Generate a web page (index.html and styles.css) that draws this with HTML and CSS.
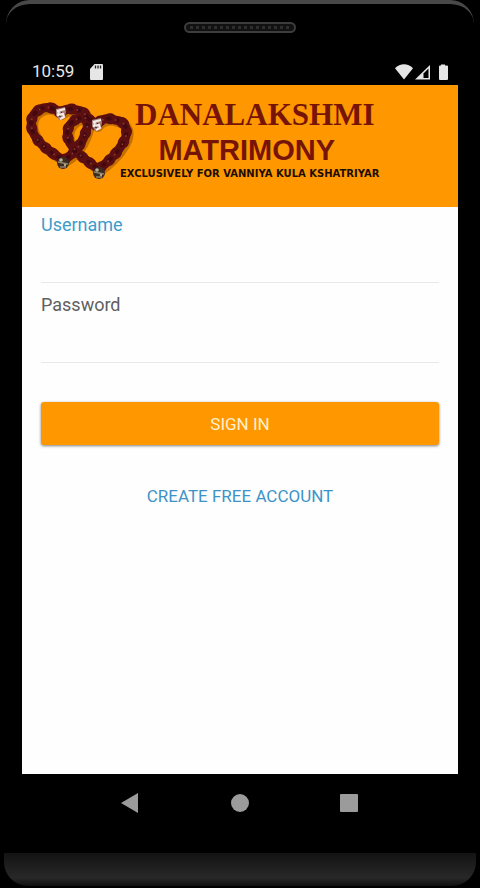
FILE: index.html
```html
<!DOCTYPE html>
<html lang="en">
<head>
    <meta charset="UTF-8">
    <meta name="viewport" content="width=device-width, initial-scale=1.0">
    <title>Sign In - Danalakshmi Matrimony</title>
    <link rel="stylesheet" href="styles.css">
</head>
<body>
    <div class="phone">
        <div class="phone-top">
            <svg class="speaker" viewBox="0 0 112 12">
                <rect x="1" y="1" width="110" height="9" rx="4.5" fill="#111" stroke="#3c3c3c" stroke-width="2"/>
                <path d="M6 5.5H106" stroke="#2e2e2e" stroke-width="3" stroke-dasharray="3 3"/>
            </svg>
        </div>

        <div class="status-bar">
            <span class="clock">10:59</span>
            <svg class="sd-card" viewBox="0 0 13 16">
                <path d="M4.5 0H12a1 1 0 0 1 1 1V15a1 1 0 0 1-1 1H1a1 1 0 0 1-1-1V5Z" fill="#e6e6e6"/>
                <path d="M5.5 1.5V4.5M8 1.5V4.5M10.5 1.5V4.5" stroke="#222" stroke-width="1.3"/>
            </svg>
            <svg class="signals" viewBox="0 0 54 16">
                <path d="M1 4.2C6-1.2 14-1.2 19 4.2L10 15.5Z" fill="#e6e6e6"/>
                <path d="M21 15.5L36 1V15.5Z" fill="#e6e6e6"/>
                <path d="M29.5 9.5L34.5 4.5V14H29.5Z" fill="#000"/>
                <path d="M47 1.5V0.5H51V1.5H53a1 1 0 0 1 1 1V15a1 1 0 0 1-1 1H46a1 1 0 0 1-1-1V2.5a1 1 0 0 1 1-1Z" fill="#e6e6e6"/>
            </svg>
        </div>

        <div class="screen">
            <div class="banner">
                <svg class="hearts" viewBox="0 0 112 90">
                    <defs>
                        <path id="heart-left" d="M38 15C33 9 23 8 17 12C8 17 7 28 13 38C19 48 30 55 41 62C50 58 59 48 63 36C69 22 64 13 55 12C48 10 42 11 38 15"/>
                        <path id="heart-right" d="M74 27C70 20 60 18 53 22C44 28 43 39 50 48C57 58 67 64 76 71C84 66 95 56 101 45C108 33 104 23 93 22C86 19 78 21 74 27"/>
                    </defs>
                    <g fill="none" stroke-linecap="round" stroke-linejoin="round">
                        <g transform="translate(2 2)" stroke="#8a4a00" stroke-opacity="0.5" stroke-width="10">
                            <use href="#heart-left"/>
                            <use href="#heart-right"/>
                        </g>
                        <g stroke="#5c0f10" stroke-width="9">
                            <use href="#heart-left"/>
                            <use href="#heart-right"/>
                        </g>
                        <g stroke="#5c0f10" stroke-width="11" stroke-dasharray="1 8 2 12 1 10">
                            <use href="#heart-left"/>
                            <use href="#heart-right"/>
                        </g>
                        <g stroke="#420a10" stroke-width="4" stroke-dasharray="1 7 2 9">
                            <use href="#heart-left"/>
                            <use href="#heart-right"/>
                        </g>
                        <g stroke="#8a3430" stroke-width="2" stroke-dasharray="0 13 0 9">
                            <use href="#heart-left"/>
                            <use href="#heart-right"/>
                        </g>
                    </g>
                    <g id="clasp">
                        <path d="M34 11L43 9L44 14L42 21L37 22L34 17Z" fill="#a8827a"/>
                        <path d="M35 13L43 11M37 13L36 17L41 16L42 19L38 21" fill="none" stroke="#f6ecea" stroke-width="2"/>
                        <path d="M39 14L40 15M37 18L39 19" stroke="#4a2320" stroke-width="1"/>
                    </g>
                    <use href="#clasp" x="36" y="11"/>
                    <g id="bell">
                        <circle cx="41" cy="65" r="6" fill="#3c2b20"/>
                        <path d="M36 64L46 66M38 69L44 69" stroke="#8d8467" stroke-width="1.5"/>
                        <circle cx="39" cy="62" r="1.8" fill="#b9b29a"/>
                        <circle cx="43" cy="67" r="1.2" fill="#b5ab8a"/>
                    </g>
                    <use href="#bell" x="36" y="10"/>
                </svg>
                <div class="brand">
                    <h1>DANALAKSHMI</h1>
                    <h2>MATRIMONY</h2>
                    <p>EXCLUSIVELY FOR VANNIYA KULA KSHATRIYAR</p>
                </div>
            </div>

            <form class="login-form">
                <div class="field active">
                    <label for="username">Username</label>
                    <input type="text" id="username">
                </div>
                <div class="field">
                    <label for="password">Password</label>
                    <input type="password" id="password">
                </div>
                <button type="button" class="signin-btn">SIGN IN</button>
                <a href="#" class="create-link">CREATE FREE ACCOUNT</a>
            </form>
        </div>

        <div class="nav-bar">
            <button type="button" aria-label="Back">
                <svg viewBox="0 0 20 20"><path d="M0 10L17 0V20Z" fill="#9b9b9b"/></svg>
            </button>
            <button type="button" aria-label="Home">
                <svg viewBox="0 0 20 20"><circle cx="10" cy="10" r="9" fill="#9b9b9b"/></svg>
            </button>
            <button type="button" aria-label="Recent apps">
                <svg viewBox="0 0 20 20"><rect x="1" y="1" width="18" height="18" rx="1" fill="#9b9b9b"/></svg>
            </button>
        </div>

        <div class="phone-bottom"></div>
    </div>
</body>
</html>
```
FILE: styles.css
```css
* {
    box-sizing: border-box;
}

body {
    margin: 0;
    background-color: #000;
    font-family: Roboto, sans-serif;
}

.phone {
    display: flex;
    flex-direction: column;
    min-height: 100vh;
    padding-bottom: 2px;
}

.phone-top {
    display: flex;
    justify-content: center;
    height: 58px;
    margin: 0 6px;
    padding-top: 18px;
    border-top: 4px solid #484848;
    border-radius: 24px 24px 0 0;
}

.phone-top .speaker {
    width: 112px;
    height: 12px;
}

.status-bar {
    display: flex;
    align-items: center;
    height: 27px;
    padding: 0 32px;
    color: #e6e6e6;
}

.clock {
    font-size: 17px;
    line-height: 27px;
}

.sd-card {
    width: 13px;
    height: 16px;
    margin-left: 16px;
}

.signals {
    width: 54px;
    height: 16px;
    margin-left: auto;
}

.screen {
    flex: 1;
    margin: 0 22px;
    background: #fefefe;
}

.banner {
    display: flex;
    height: 122px;
    padding-top: 13px;
    background: #ff9800;
}

.hearts {
    flex: none;
    width: 112px;
    height: 90px;
}

.brand {
    margin-left: -14px;
    text-align: center;
    white-space: nowrap;
}

.brand h1 {
    margin: 0;
    padding-left: 10px;
    font-family: "Liberation Serif", serif;
    font-size: 31px;
    line-height: 34px;
    color: #761408;
}

.brand h2 {
    margin: 0;
    padding-right: 6px;
    font-family: "Liberation Sans", sans-serif;
    font-size: 29px;
    line-height: 36px;
    color: #761408;
}

.brand p {
    margin: 0;
    font-family: "DejaVu Sans", sans-serif;
    font-size: 10px;
    font-weight: bold;
    line-height: 12px;
    color: #1c0d00;
}

.login-form {
    display: flex;
    flex-direction: column;
    padding: 0 19px;
}

.field {
    display: flex;
    flex-direction: column;
    height: 80px;
    padding-top: 6px;
}

.field label {
    font-size: 18px;
    line-height: 24px;
    color: #606060;
}

.field.active label {
    color: #3d9bcb;
}

.field input {
    height: 46px;
    padding: 0;
    border: none;
    border-bottom: 1px solid #e9e9e9;
    background: transparent;
    font-family: inherit;
    font-size: 18px;
    outline: none;
}

.signin-btn {
    height: 43px;
    margin-top: 35px;
    border: none;
    border-radius: 3px;
    background: #ff9800;
    box-shadow: 0 1px 3px rgba(0, 0, 0, 0.5);
    font-family: inherit;
    font-size: 17px;
    color: #fff0cf;
    cursor: pointer;
}

.create-link {
    align-self: center;
    margin-top: 39px;
    font-size: 17px;
    line-height: 24px;
    color: #3d93c8;
    text-decoration: none;
}

.nav-bar {
    display: flex;
    justify-content: center;
    gap: 69px;
    height: 79px;
    padding-top: 9px;
}

.nav-bar button {
    width: 40px;
    height: 40px;
    padding: 10px;
    border: none;
    background: none;
    cursor: pointer;
}

.nav-bar svg {
    display: block;
    width: 20px;
    height: 20px;
}

.phone-bottom {
    height: 33px;
    margin: 0 4px;
    border-radius: 0 0 24px 24px;
    background: linear-gradient(#131313, #282828 75%, #101010);
}
```
